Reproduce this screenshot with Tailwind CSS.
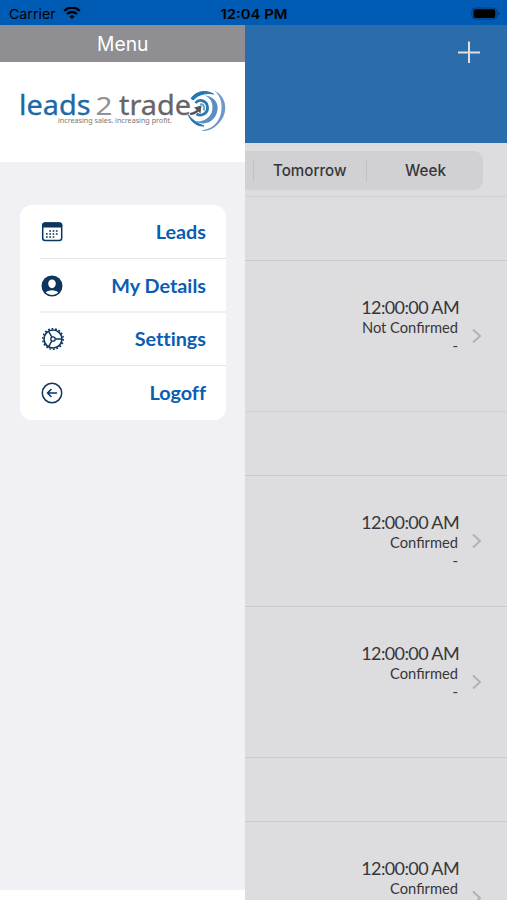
<!DOCTYPE html>
<html lang="en">
<head>
<meta charset="utf-8">
<title>Menu</title>
<script src="https://cdn.jsdelivr.net/npm/@tailwindcss/browser@4"></script>
</head>
<body class="w-[507px] h-[900px] overflow-hidden bg-[#dddddf] font-['Lato',sans-serif]">
<div class="flex flex-col h-[900px] overflow-hidden">
  <!-- Status bar -->
  <header class="h-[25px] shrink-0 bg-[#005bb5] grid grid-cols-3 items-center text-black font-['Inter',sans-serif] text-[13px] leading-none pt-[2px]">
    <div class="flex items-center gap-[7px] pl-[9px]">
      <svg class="w-[47px] h-[16px]" viewBox="0 0 47 16"><text x="0" y="12.5" font-size="13.3" textLength="46.500" lengthAdjust="spacingAndGlyphs">Carrier</text></svg>
      <svg class="w-[18px] h-[14px]" viewBox="0 0 18 14" fill="none" stroke="#000" stroke-width="2.4"><path d="M1.200 3.800C5.500-.4 12.500-.4 16.800 3.800"/><path d="M4.100 7C6.800 4.400 11.200 4.400 13.900 7"/><path d="M9 12 6.300 9.300C7.800 8 10.200 8 11.700 9.300Z" fill="#000" stroke="none"/></svg>
    </div>
    <div class="flex justify-center"><svg class="w-[68px] h-[16px]" viewBox="0 0 68 16"><text x="0.500" y="12.500" font-size="13" font-weight="600" textLength="67" lengthAdjust="spacingAndGlyphs">12:04 PM</text></svg></div>
    <div class="flex justify-end pr-[7px]"><svg class="w-[29px] h-[14px]" viewBox="0 0 29 14"><rect x=".8" y="1" width="25" height="11" rx="3.500" fill="none" stroke="#003a78" stroke-width="1"/><rect x="2.500" y="2.300" width="21.800" height="8.600" rx="2" fill="#000"/><path d="M27 4.500v4q1.300-.6 1.300-2t-1.300-2" fill="#003a78"/></svg></div>
  </header>

  <div class="flex flex-1 min-h-0">
    <!-- Side menu -->
    <aside class="w-[245px] shrink-0 bg-[#f0f0f5] flex flex-col">
      <div class="h-[37px] shrink-0 bg-[#8e8e93] text-white text-center font-['Inter',sans-serif] flex items-center justify-center"><svg class="w-[52px] h-[26px]" viewBox="0 0 52 26"><text x="0" y="20" font-size="19.500" fill="#fff" textLength="51.500" lengthAdjust="spacingAndGlyphs">Menu</text></svg></div>
      <div class="h-[100px] shrink-0 bg-white pt-[24px] pl-[18px]">
        <svg class="w-[212px] h-[52px]" viewBox="18 86 212 52" fill="none">
          <g font-family="Noto Sans, sans-serif" font-size="27">
            <text x="19" y="114.500" fill="#1d69a5" stroke="#1d69a5" stroke-width=".3" textLength="71.500" lengthAdjust="spacingAndGlyphs">leads</text>
            <text x="95.500" y="114.500" fill="#929292" font-size="26" textLength="17" lengthAdjust="spacingAndGlyphs">2</text>
            <text x="119" y="114.500" fill="#666" stroke="#666" stroke-width=".3" textLength="72" lengthAdjust="spacingAndGlyphs">trade</text>
            <text x="58" y="122.800" fill="#777" font-size="7.600" textLength="114" lengthAdjust="spacingAndGlyphs">increasing sales. increasing profit.</text>
          </g>
          <path d="M191 98.500C196 91 206 89.500 213.500 94C207 92.800 198 94 193.500 100Z" fill="#2475ad" stroke="#2475ad" stroke-width="1"/>
          <path d="M214 90.500C227 96 229 113 219 123C214 129 207 132 201 130.500C211 129.500 219 123 221 113C223 103 220 95 214 90.500Z" fill="#7397c7"/>
          <path d="M205 95.500C216 96.500 220.500 106 216 115C212 123 203 126 195 121C202 122.500 208.500 119 211.500 113C214 106 212 98.500 205 95.500Z" fill="#5c8ec1"/>
          <path d="M188.500 115C191 122 197 126.500 204 126C198 123.500 192.500 120.500 188.500 115Z" fill="#2475ad" stroke="#2475ad"/>
          <path d="M195.500 103C199.500 98 207 101 207.500 107C208 113 202 117 196.500 114" stroke="#2879b2" stroke-width="2.800"/>
          <path d="M200 104.500C204 103.500 205 108 203.500 110.500" stroke="#68a0cd" stroke-width="2"/>
          <path d="M190 114Q196 113.500 199.500 108.500" stroke="#555" stroke-width="2.200"/>
          <path d="M194 107.500 201.500 105.500 200.500 113.500Z" fill="#555"/>
        </svg>
      </div>
      <nav class="mt-[43px] ml-[20px] w-[206px] h-[215px] shrink-0 bg-white rounded-[12px] grid grid-rows-4 pl-[20px] text-[#0b5db1] font-bold text-[19.800px] leading-none [font-variant-ligatures:none]">
        <a class="flex items-center justify-between pt-[1px] pr-[20px] border-b border-[#e6e6e9]">
          <svg class="w-[24px] h-[24px]" viewBox="0 0 24 24" fill="none" stroke="#0d355f"><rect x="2.700" y="3" width="19" height="17.500" rx="2.500" stroke-width="1.500"/><path d="M2.500 7V5Q2.500 3 5 3H19.500Q21.700 3 21.700 5V7Z" fill="#0d355f"/><path d="M9.300 11H19M6 14H19M6 17H15.900" stroke-width="1.700" stroke-dasharray="1.700 1.600"/></svg>
          <span>Leads</span>
        </a>
        <a class="flex items-center justify-between pt-[2px] pr-[20px] border-b-2 border-[#f0f0f2]">
          <svg class="w-[24px] h-[24px]" viewBox="0 0 24 24"><circle cx="12" cy="12" r="10.500" fill="#0d355f"/><path d="M12 5.600c2.300 0 3.800 1.700 3.800 4s-1.600 4.600-3.800 4.600-3.800-2.300-3.800-4.600 1.500-4 3.800-4M12 16.300c3 0 5 .9 6.200 2.300C16.600 20.200 14.400 21 12 21s-4.600-.8-6.200-2.400c1.200-1.400 3.200-2.300 6.200-2.300" fill="#fff"/></svg>
          <span>My Details</span>
        </a>
        <a class="flex items-center justify-between pt-[1px] pr-[20px] border-b border-[#e6e6e9]">
          <svg class="w-[24px] h-[24px]" viewBox="0 0 24 24" fill="none" stroke="#0d355f"><circle cx="13" cy="12" r="9" stroke-width="1.600"/><circle cx="13" cy="12" r="10.300" stroke-width="1.500" stroke-dasharray="1.800 1.796"/><circle cx="13" cy="12" r="2.200" stroke-width="1.300"/><path d="M15.200 12H22M11.900 10.100 8.500 4.200M11.900 13.900 8.500 19.800" stroke-width="1.400"/></svg>
          <span>Settings</span>
        </a>
        <a class="flex items-center justify-between pr-[20px]">
          <svg class="w-[24px] h-[24px]" viewBox="0 0 24 24" fill="none" stroke="#0d355f" stroke-width="1.500" stroke-linecap="round" stroke-linejoin="round"><circle cx="12" cy="12" r="9.700"/><path d="M16.500 12H7.500M11 8.500 7.500 12 11 15.500" stroke-width="1.600"/></svg>
          <span>Logoff</span>
        </a>
      </nav>
      <div class="mt-auto h-[10px] bg-white"></div>
    </aside>

    <!-- Dimmed appointments list -->
    <main class="flex-1 min-w-0 flex flex-col overflow-hidden text-[#37373a]">
      <div class="h-[118px] shrink-0 bg-[#2b6caa] flex justify-end items-start pt-[16px] pr-[27px]">
        <svg class="w-[22px] h-[22px]" viewBox="0 0 22 22" stroke="#dedfe2" stroke-width="2"><path d="M0 11.500H22M11 .5V22"/></svg>
      </div>
      <div class="h-[54px] shrink-0 pt-[8px] border-b border-[#d0d0d2]">
        <div class="w-[238px] h-[39px] bg-[#d1d1d3] rounded-r-[9px] flex items-center font-['Inter',sans-serif] font-medium">
          <div class="ml-[8px] w-[114px] h-[23px] border-l border-r border-[#c2c2c5] flex items-center justify-center"><svg class="w-[74px] h-[22px]" viewBox="0 0 74 22"><text x="0" y="15.800" font-size="15.500" fill="#37373a" textLength="73.500" lengthAdjust="spacingAndGlyphs">Tomorrow</text></svg></div>
          <div class="flex-1 flex justify-center"><svg class="w-[41px] h-[22px]" viewBox="0 0 41 22"><text x="0" y="15.800" font-size="15.500" fill="#37373a" textLength="41" lengthAdjust="spacingAndGlyphs">Week</text></svg></div>
        </div>
      </div>
      <div class="h-[64px] shrink-0 border-b border-[#cacacc]"></div>
      <div class="h-[151px] shrink-0 border-b border-[#d0d0d2] flex justify-end pr-[24px]">
        <div class="text-right pt-[35px] mr-[11px]"><p class="text-[18px] leading-[22px] tracking-[-0.620px]">12:00:00 AM</p><p class="text-[14.700px] leading-[18px] pr-[1px]">Not Confirmed</p><p class="text-[15px] leading-[18px] pr-[1px]">-</p></div>
        <svg class="self-center w-[13px] h-[16px]" viewBox="0 0 13 16" fill="none" stroke="#b2b2b5" stroke-width="2"><path d="M3 1.500 10 8 3 14.500"/></svg>
      </div>
      <div class="h-[64px] shrink-0 border-b border-[#cacacc]"></div>
      <div class="h-[131px] shrink-0 border-b border-[#cacacc] flex justify-end pr-[24px]">
        <div class="text-right pt-[35px] mr-[11px]"><p class="text-[18px] leading-[22px] tracking-[-0.620px]">12:00:00 AM</p><p class="text-[14.700px] leading-[18px] pr-[1px]">Confirmed</p><p class="text-[15px] leading-[18px] pr-[1px]">-</p></div>
        <svg class="self-center w-[13px] h-[16px]" viewBox="0 0 13 16" fill="none" stroke="#b2b2b5" stroke-width="2"><path d="M3 1.500 10 8 3 14.500"/></svg>
      </div>
      <div class="h-[151px] shrink-0 border-b border-[#cacacc] flex justify-end pr-[24px]">
        <div class="text-right pt-[35px] mr-[11px]"><p class="text-[18px] leading-[22px] tracking-[-0.620px]">12:00:00 AM</p><p class="text-[14.700px] leading-[18px] pr-[1px]">Confirmed</p><p class="text-[15px] leading-[18px] pr-[1px]">-</p></div>
        <svg class="self-center w-[13px] h-[16px]" viewBox="0 0 13 16" fill="none" stroke="#b2b2b5" stroke-width="2"><path d="M3 1.500 10 8 3 14.500"/></svg>
      </div>
      <div class="h-[64px] shrink-0 border-b border-[#cacacc]"></div>
      <div class="h-[151px] shrink-0 flex justify-end pr-[24px]">
        <div class="text-right pt-[35px] mr-[11px]"><p class="text-[18px] leading-[22px] tracking-[-0.620px]">12:00:00 AM</p><p class="text-[14.700px] leading-[18px] pr-[1px]">Confirmed</p></div>
        <svg class="self-center w-[13px] h-[16px]" viewBox="0 0 13 16" fill="none" stroke="#b2b2b5" stroke-width="2"><path d="M3 1.500 10 8 3 14.500"/></svg>
      </div>
    </main>
  </div>
</div>
</body>
</html>
